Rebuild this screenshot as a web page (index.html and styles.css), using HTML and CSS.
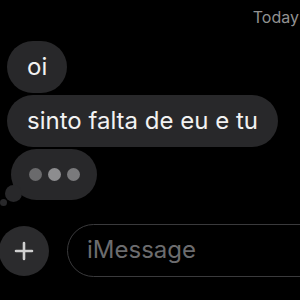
FILE: index.html
```html
<!DOCTYPE html>
<html>
<head>
<meta charset="utf-8">
<link rel="stylesheet" href="styles.css">
</head>
<body>
<div class="screen">
  <div class="date">Today</div>
  <div class="thread">
    <div class="bubble">oi</div>
    <div class="bubble">sinto falta de eu e tu</div>
    <div class="typing">
      <span class="dot d1"></span>
      <span class="dot d2"></span>
      <span class="dot d3"></span>
      <span class="tail-big"></span>
      <span class="tail-small"></span>
    </div>
  </div>
  <div class="composer">
    <div class="plus">
      <svg width="20" height="20" viewBox="0 0 20 20"><path d="M10 2v16M2 10h16" stroke="#cfcfcf" stroke-width="2.6" stroke-linecap="round" fill="none"/></svg>
    </div>
    <div class="field">iMessage</div>
  </div>
</div>
</body>
</html>
```
FILE: styles.css
```css
html, body {
  margin: 0;
  padding: 0;
  background: #000;
}
.screen {
  width: 300px;
  height: 300px;
  overflow: hidden;
  font-family: Inter, "Liberation Sans", sans-serif;
  display: flex;
  flex-direction: column;
}
.date {
  align-self: flex-end;
  margin-top: 7px;
  margin-right: 1px;
  font-size: 16px;
  line-height: 21px;
  color: #929292;
}
.thread {
  display: flex;
  flex-direction: column;
  align-items: flex-start;
  gap: 2px;
  padding-left: 7px;
  margin-top: 13px;
}
.bubble {
  background: #28282a;
  color: #f2f2f2;
  font-size: 24px;
  line-height: 52px;
  height: 52px;
  padding: 0 20px;
  border-radius: 26px;
  white-space: nowrap;
}
.typing {
  position: relative;
  margin-left: 4px;
  width: 86px;
  height: 51px;
  border-radius: 26px;
  background: #28282a;
  display: flex;
  align-items: center;
  justify-content: center;
  gap: 6px;
}
.dot {
  width: 13px;
  height: 13px;
  border-radius: 50%;
}
.d1 { background: #6a6a6c; }
.d2 { background: #8d8d8f; }
.d3 { background: #7a7a7c; }
.tail-big {
  position: absolute;
  left: -6px;
  top: 36px;
  width: 17px;
  height: 17px;
  border-radius: 50%;
  background: #28282a;
}
.tail-small {
  position: absolute;
  left: -11px;
  top: 50px;
  width: 7px;
  height: 7px;
  border-radius: 50%;
  background: #28282a;
}
.composer {
  display: flex;
  align-items: center;
  gap: 18px;
  margin-top: 24px;
}
.plus {
  flex: none;
  width: 50px;
  height: 50px;
  border-radius: 50%;
  background: #2b2b2d;
  display: flex;
  align-items: center;
  justify-content: center;
  margin-left: -1px;
}
.plus svg { display: block; }
.field {
  flex: none;
  box-sizing: border-box;
  width: 280px;
  height: 53px;
  border: 1.5px solid #3a3a3c;
  border-radius: 27px;
  padding-left: 19px;
  font-size: 24px;
  line-height: 50px;
  color: #6c6c6e;
}
```
